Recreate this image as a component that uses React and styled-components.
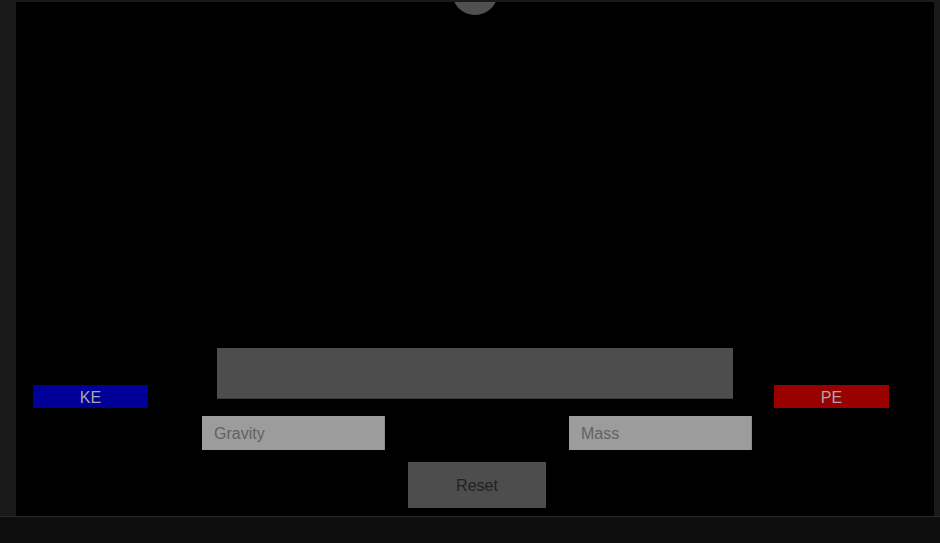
import React from "react";
import styled, { createGlobalStyle } from "styled-components";

const GlobalStyle = createGlobalStyle`
  html, body {
    margin: 0;
    padding: 0;
    background: #1a1a1a;
    font-family: "Liberation Sans", Arial, sans-serif;
  }
`;

export default function App() {
  return (
    <>
      <GlobalStyle />
      <Page>
        <Stage>
          <Ball />
          <MeterRow>
            <Meter color="#000099" offset={17}>KE</Meter>
            <EnergyBar />
            <Meter color="#990000" offset={41}>PE</Meter>
          </MeterRow>
          <InputRow>
            <Field placeholder="Gravity" />
            <Field placeholder="Mass" />
          </InputRow>
          <ButtonRow>
            <ResetButton>Reset</ResetButton>
          </ButtonRow>
        </Stage>
        <Footer />
      </Page>
    </>
  );
}

const Page = styled.div`
  width: 940px;
  height: 543px;
  display: flex;
  flex-direction: column;
  padding: 2px 6px 0 16px;
  box-sizing: border-box;
  background: #1a1a1a;
`;

const Stage = styled.div`
  position: relative;
  height: 514px;
  background: #000;
  overflow: hidden;
  display: flex;
  flex-direction: column;
  justify-content: flex-end;
  padding-bottom: 8px;
  box-sizing: border-box;
`;

const Ball = styled.div`
  position: absolute;
  left: 436px;
  top: -33px;
  width: 46px;
  height: 46px;
  border-radius: 50%;
  background: #505050;
`;

const MeterRow = styled.div`
  display: flex;
  align-items: flex-start;
  height: 60px;
`;

const Meter = styled.div`
  margin-left: ${(p) => p.offset}px;
  margin-top: 37px;
  width: 115px;
  height: 23px;
  background: ${(p) => p.color};
  color: #a8a8a8;
  font-size: 16px;
  line-height: 25px;
  text-align: center;
`;

const EnergyBar = styled.div`
  margin-left: 69px;
  width: 516px;
  height: 50px;
  background: #4d4d4d;
  border-bottom: 1px solid #3a3a3a;
`;

const InputRow = styled.div`
  display: flex;
  gap: 184px;
  margin-top: 8px;
  padding-left: 186px;
`;

const Field = styled.input`
  width: 183px;
  height: 34px;
  box-sizing: border-box;
  border: none;
  border-right: 1px solid #8a8a8a;
  background: #9c9c9c;
  padding: 2px 12px 0;
  font-family: "Liberation Sans", Arial, sans-serif;
  font-size: 16px;
  color: #333;
  outline: none;

  &::placeholder {
    color: #626262;
  }
`;

const ButtonRow = styled.div`
  display: flex;
  margin-top: 12px;
  padding-left: 392px;
`;

const ResetButton = styled.button`
  width: 138px;
  height: 46px;
  border: none;
  padding: 2px 0 0;
  background: #4d4d4d;
  color: #222;
  font-family: "Liberation Sans", Arial, sans-serif;
  font-size: 16px;
  cursor: pointer;
`;

const Footer = styled.div`
  flex: 1;
  margin: 0 -6px 0 -16px;
  background: #0e0e0e;
  border-top: 1px solid #2a2a2a;
`;
